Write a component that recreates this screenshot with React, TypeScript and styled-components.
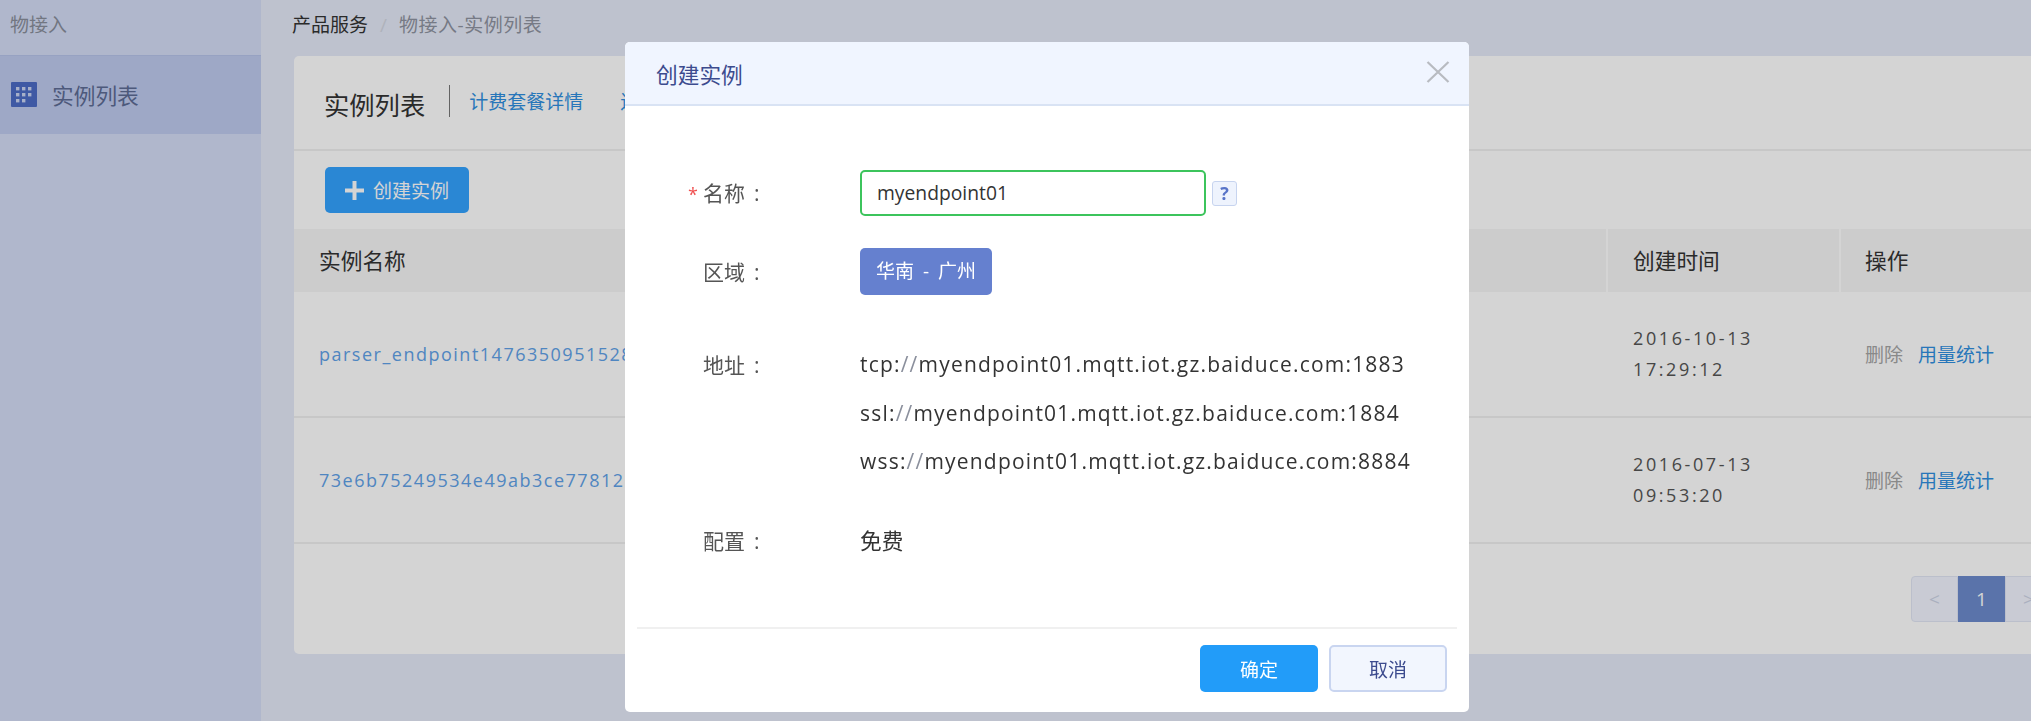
import React from "react";
import styled, { createGlobalStyle } from "styled-components";

const GlobalStyle = createGlobalStyle`
  html, body {
    margin: 0;
    padding: 0;
    height: 721px;
    overflow: hidden;
    font-family: "Open Sans", "Noto Sans CJK SC", sans-serif;
    color: #333;
  }
  * { box-sizing: border-box; }
`;

const Page = styled.div`
  display: flex;
  width: 2031px;
  height: 721px;
  overflow: hidden;
  background: #e5eaf8;
`;

const Sidebar = styled.aside`
  flex: 0 0 261px;
  background: #d4ddf6;
`;

const SideTitle = styled.div`
  height: 55px;
  line-height: 50px;
  padding-left: 10px;
  font-size: 19px;
  color: #8a8f9c;
`;

const SideItem = styled.div`
  display: flex;
  align-items: center;
  gap: 15px;
  height: 79px;
  padding: 0 0 2px 11px;
  background: #bfcbef;
  border-top: 1px solid #b6c3ea;
  font-size: 21.7px;
  color: #5d6c95;
`;

const Main = styled.main`
  flex: 1;
  min-width: 0;
  padding-left: 33px;
`;

const Breadcrumb = styled.div`
  display: flex;
  height: 56px;
  margin-left: -2px;
  line-height: 50px;
  font-size: 19px;
  color: #333;
`;

const Crumb = styled.span<{ $muted?: boolean }>`
  color: ${(p) => (p.$muted ? "#8f93a0" : "#333")};
  letter-spacing: ${(p) => (p.$muted ? "0.5px" : "0")};
`;

const CrumbSep = styled.span`
  width: 31px;
  text-align: center;
  color: #d3d7e2;
`;

const Card = styled.section`
  width: 1790px;
  height: 598px;
  background: #fff;
  border-radius: 5px;
`;

const CardHead = styled.div`
  display: flex;
  align-items: center;
  height: 95px;
  padding-left: 30px;
  border-bottom: 2px solid #f0f0f0;
`;

const CardTitle = styled.h1`
  margin: 2px 0 0;
  font-size: 25.3px;
  font-weight: 400;
  color: #333;
`;

const HeadRule = styled.span`
  width: 1px;
  height: 32px;
  margin: -3px 19px 0 24px;
  background: #777;
`;

const TabLink = styled.a`
  margin: -4px 37px 0 0;
  font-size: 19px;
  color: #2f8fe0;
  white-space: nowrap;
`;

const Toolbar = styled.div`
  height: 78px;
  padding: 16px 0 0 31px;
`;

const CreateButton = styled.button`
  display: flex;
  align-items: center;
  gap: 9px;
  width: 144px;
  height: 46px;
  padding: 0 0 0 20px;
  border: 0;
  border-radius: 5px;
  background: #33a3ff;
  color: #fff;
  font-family: inherit;
  font-size: 19px;
`;

const TableHead = styled.div`
  display: flex;
  height: 63px;
  background: #f6f6f6;
  font-size: 21.7px;
  line-height: 63px;
`;

const HeadCell = styled.div<{ $w?: number; $sep?: boolean; $pad?: number }>`
  flex: ${(p) => (p.$w ? `0 0 ${p.$w}px` : 1)};
  padding-left: ${(p) => p.$pad ?? 25}px;
  border-left: ${(p) => (p.$sep ? "2px solid #fff" : "0")};
`;

const Row = styled.div`
  display: flex;
  align-items: center;
  height: 126px;
  border-bottom: 2px solid #f0f0f0;
`;

const NameCell = styled.a`
  flex: 1;
  padding-left: 25px;
  font-size: 18px;
  letter-spacing: 1.5px;
  color: #5fa2e8;
  white-space: nowrap;
  overflow: hidden;
`;

const DateCell = styled.div`
  flex: 0 0 233px;
  padding-left: 27px;
  font-size: 18px;
  line-height: 31px;
  letter-spacing: 2.6px;
  color: #555;
`;

const ActionCell = styled.div`
  display: flex;
  flex: 0 0 245px;
  gap: 15px;
  padding-left: 26px;
  font-size: 19px;
`;

const ActionLink = styled.a<{ $muted?: boolean }>`
  color: ${(p) => (p.$muted ? "#a5a5a5" : "#2f8fe0")};
`;

const Pager = styled.div`
  display: flex;
  justify-content: flex-end;
  padding: 32px 32px 0 0;
`;

const PageButton = styled.div<{ $active?: boolean; $first?: boolean }>`
  width: 47px;
  height: 46px;
  line-height: 44px;
  text-align: center;
  font-size: 19px;
  color: ${(p) => (p.$active ? "#fff" : "#cdd3e6")};
  background: ${(p) => (p.$active ? "#6d8bcd" : "#f2f5ff")};
  border: 1px solid ${(p) => (p.$active ? "#6d8bcd" : "#e1e6f5")};
  border-radius: ${(p) => (p.$first ? "4px 0 0 4px" : "0")};
`;

const Mask = styled.div`
  position: fixed;
  inset: 0;
  padding: 42px 0 0 625px;
  background: rgba(0, 0, 0, 0.17);
`;

const Modal = styled.div`
  display: flex;
  flex-direction: column;
  width: 844px;
  height: 670px;
  background: #fff;
  border-radius: 5px;
  overflow: hidden;
`;

const ModalHead = styled.div`
  display: flex;
  align-items: center;
  justify-content: space-between;
  height: 64px;
  padding: 0 19px 0 31px;
  background: #f0f5ff;
  border-bottom: 2px solid #d9e3f4;
  font-size: 21.7px;
  color: #3c4b8e;
`;

const CloseIcon = styled.svg`
  display: block;
  width: 24px;
  height: 22px;
  margin-bottom: 2px;
`;

const ModalBody = styled.div`
  flex: 1;
  padding-top: 64px;
`;

const FormRow = styled.div<{ $gap?: number; $center?: boolean }>`
  display: flex;
  align-items: ${(p) => (p.$center ? "center" : "flex-start")};
  margin-top: ${(p) => p.$gap ?? 0}px;
  font-size: 21px;
`;

const Label = styled.div<{ $lh?: number }>`
  position: relative;
  flex: 0 0 235px;
  padding-left: 78px;
  line-height: ${(p) => p.$lh ?? 46}px;
  color: #555;
  white-space: pre;
`;

const LabelColon = styled.span`
  margin-left: 9px;
`;

const Star = styled.span`
  position: absolute;
  left: 63px;
  top: 1px;
  color: #f05050;
  font-size: 18px;
`;

const NameInput = styled.input`
  width: 346px;
  height: 46px;
  padding: 0 15px 2px;
  border: 2px solid #3cc45c;
  border-radius: 5px;
  outline: 0;
  font-family: inherit;
  font-size: 19.3px;
  color: #333;
`;

const HelpBadge = styled.span`
  width: 25px;
  height: 25px;
  margin-left: 6px;
  line-height: 22px;
  text-align: center;
  font-size: 18px;
  font-weight: 700;
  color: #5874c8;
  background: #eef3fd;
  border: 1px solid #c7d4ef;
  border-radius: 3px;
`;

const RegionButton = styled.div`
  width: 132px;
  height: 47px;
  line-height: 47px;
  text-align: center;
  font-size: 19px;
  word-spacing: 4px;
  color: #fff;
  background: #6580cf;
  border-radius: 5px;
`;

const AddressList = styled.div`
  font-size: 21px;
  line-height: 48.5px;
  letter-spacing: 1.2px;
  color: #333;
`;

const Slashes = styled.span`
  color: #8a8f9c;
`;

const PlainValue = styled.div`
  line-height: 46px;
  font-size: 21.7px;
  color: #333;
`;

const ModalFoot = styled.div`
  display: flex;
  justify-content: flex-end;
  gap: 11px;
  height: 85px;
  margin: 0 12px;
  padding: 16px 10px 0 0;
  border-top: 2px solid #f0f0f0;
`;

const FootButton = styled.button<{ $primary?: boolean }>`
  width: 118px;
  height: 47px;
  border: ${(p) => (p.$primary ? "0" : "2px solid #c9d5f0")};
  border-radius: 5px;
  background: ${(p) => (p.$primary ? "#229cf9" : "#f2f6fe")};
  color: ${(p) => (p.$primary ? "#fff" : "#3c4b8e")};
  font-family: inherit;
  font-size: 19px;
`;

const GridIcon = () => (
  <svg width="26" height="25" viewBox="0 0 26 25">
    <rect width="26" height="25" rx="1" fill="#4c6cc6" />
    {[5, 11, 17].map((y) =>
      [5, 11, 17].map((x) =>
        y === 17 && x === 17 ? null : (
          <rect key={`${x}-${y}`} x={x} y={y} width="3.4" height="3.4" fill="#c9d4f2" />
        )
      )
    )}
  </svg>
);

const PlusIcon = () => (
  <svg width="19" height="19" viewBox="0 0 19 19">
    <path d="M7.5 0h4v7.5H19v4h-7.5V19h-4v-7.5H0v-4h7.5z" fill="#fff" />
  </svg>
);

const rows = [
  { name: "parser_endpoint1476350951528", date: "2016-10-13", time: "17:29:12" },
  { name: "73e6b75249534e49ab3ce7781266", date: "2016-07-13", time: "09:53:20" },
];

const addresses = [
  ["tcp:", "myendpoint01.mqtt.iot.gz.baiduce.com:1883"],
  ["ssl:", "myendpoint01.mqtt.iot.gz.baiduce.com:1884"],
  ["wss:", "myendpoint01.mqtt.iot.gz.baiduce.com:8884"],
];

export default function App() {
  return (
    <>
      <GlobalStyle />
      <Page>
        <Sidebar>
          <SideTitle>物接入</SideTitle>
          <SideItem>
            <GridIcon />
            实例列表
          </SideItem>
        </Sidebar>
        <Main>
          <Breadcrumb>
            <Crumb>产品服务</Crumb>
            <CrumbSep>/</CrumbSep>
            <Crumb $muted>物接入-实例列表</Crumb>
          </Breadcrumb>
          <Card>
            <CardHead>
              <CardTitle>实例列表</CardTitle>
              <HeadRule />
              <TabLink>计费套餐详情</TabLink>
              <TabLink>连接测试</TabLink>
            </CardHead>
            <Toolbar>
              <CreateButton>
                <PlusIcon />
                创建实例
              </CreateButton>
            </Toolbar>
            <TableHead>
              <HeadCell>实例名称</HeadCell>
              <HeadCell $w={233} $sep>创建时间</HeadCell>
              <HeadCell $w={245} $sep $pad={24}>操作</HeadCell>
            </TableHead>
            {rows.map((r) => (
              <Row key={r.name}>
                <NameCell>{r.name}</NameCell>
                <DateCell>
                  {r.date}
                  <br />
                  {r.time}
                </DateCell>
                <ActionCell>
                  <ActionLink $muted>删除</ActionLink>
                  <ActionLink>用量统计</ActionLink>
                </ActionCell>
              </Row>
            ))}
            <Pager>
              <PageButton $first>&lt;</PageButton>
              <PageButton $active>1</PageButton>
              <PageButton>&gt;</PageButton>
            </Pager>
          </Card>
        </Main>
      </Page>
      <Mask>
        <Modal>
          <ModalHead>
            创建实例
            <CloseIcon viewBox="0 0 24 22">
              <path d="M1.5 1 22.5 21M22.5 1 1.5 21" stroke="#b8bbc1" strokeWidth="2.2" fill="none" />
            </CloseIcon>
          </ModalHead>
          <ModalBody>
            <FormRow $center>
              <Label>
                <Star>*</Star>
                名称<LabelColon>:</LabelColon>
              </Label>
              <NameInput defaultValue="myendpoint01" />
              <HelpBadge>?</HelpBadge>
            </FormRow>
            <FormRow $gap={32} $center>
              <Label>区域<LabelColon>:</LabelColon></Label>
              <RegionButton>华南 - 广州</RegionButton>
            </FormRow>
            <FormRow $gap={45}>
              <Label $lh={50}>地址<LabelColon>:</LabelColon></Label>
              <AddressList>
                {addresses.map(([scheme, host]) => (
                  <div key={scheme}>
                    {scheme}
                    <Slashes>//</Slashes>
                    {host}
                  </div>
                ))}
              </AddressList>
            </FormRow>
            <FormRow $gap={32}>
              <Label>配置<LabelColon>:</LabelColon></Label>
              <PlainValue>免费</PlainValue>
            </FormRow>
          </ModalBody>
          <ModalFoot>
            <FootButton $primary>确定</FootButton>
            <FootButton>取消</FootButton>
          </ModalFoot>
        </Modal>
      </Mask>
    </>
  );
}
